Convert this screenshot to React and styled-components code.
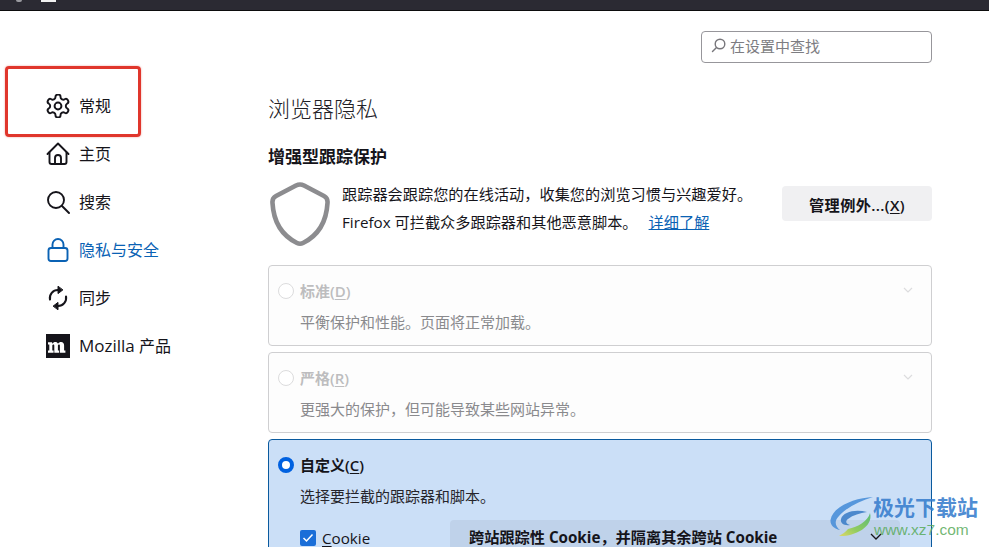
import React from 'react';
import styled, { createGlobalStyle } from 'styled-components';

const Global = createGlobalStyle`
  html, body {
    margin: 0;
    padding: 0;
    height: 547px;
    overflow: hidden;
    background: #fff;
  }
  body {
    font-family: "Open Sans", "Noto Sans CJK SC", sans-serif;
    color: #15141a;
  }
`;

const Page = styled.div`
  position: relative;
  width: 989px;
  height: 547px;
  overflow: hidden;
`;

const TopBar = styled.div`
  height: 10px;
  background: #2b2a33;
  border-bottom: 1px solid #0c0c0d;
  display: flex;
  align-items: flex-start;
  gap: 19px;
  padding-left: 16px;
`;

const TopDot = styled.span`
  width: 6px;
  height: 2px;
  background: #9a9aa0;
  border-radius: 0 0 3px 3px;
`;

const TopTab = styled.span`
  width: 15px;
  height: 2px;
  background: #f2f2f2;
`;

const Layout = styled.div`
  display: flex;
`;

const Sidebar = styled.nav`
  width: 268px;
  flex: none;
  padding: 71px 0 0 46px;
  box-sizing: border-box;
  display: flex;
  flex-direction: column;
`;

const NavItem = styled.div`
  height: 48px;
  display: flex;
  align-items: center;
  gap: 9px;
  font-size: 16px;
  color: ${(p) => (p.$active ? '#0a62b4' : '#15141a')};
`;

const NavLabel = styled.span`
  line-height: 22px;
  margin-top: -1px;
`;

const LatinWord = styled.span`
  font-size: 17px;
`;

const NavIcon = styled.svg`
  width: 24px;
  height: 24px;
  flex: none;
  fill: none;
  stroke: currentColor;
  stroke-width: ${(p) => p.$stroke || 1.9};
  stroke-linecap: round;
  stroke-linejoin: round;
`;

const Main = styled.main`
  width: 664px;
  flex: none;
`;

const SearchRow = styled.div`
  display: flex;
  justify-content: flex-end;
  padding-top: 20px;
`;

const SearchBox = styled.div`
  width: 231px;
  height: 32px;
  box-sizing: border-box;
  border: 1px solid #97969b;
  border-radius: 4px;
  display: flex;
  align-items: center;
  gap: 4px;
  padding: 0 0 3px 9px;
  color: #7d7d82;
  font-size: 15px;
`;

const SearchIcon = styled.svg`
  width: 15px;
  height: 15px;
  fill: none;
  stroke: #77767b;
  stroke-width: 1.4;
  stroke-linecap: round;
`;

const Title = styled.h1`
  margin: 30px 0 0;
  font-size: 22px;
  line-height: 30px;
  font-weight: 300;
  color: #222127;
`;

const SectionTitle = styled.h2`
  margin: 23px 0 0;
  font-size: 17px;
  line-height: 22px;
  font-weight: 700;
`;

const Intro = styled.div`
  display: flex;
  align-items: flex-start;
  margin-top: 14px;
  height: 83px;
`;

const ShieldIcon = styled.svg`
  width: 62px;
  height: 66px;
  flex: none;
  margin: -1px 11px 0 1px;
  fill: none;
  stroke: #8c8c8f;
  stroke-width: 4.6;
  stroke-linejoin: round;
`;

const IntroText = styled.div`
  flex: 1;
  font-size: 15.2px;
  line-height: 27.5px;
  margin-top: -1px;
`;

const LearnMore = styled.a`
  margin-left: 11px;
  color: #0a62b4;
  text-decoration: underline;
`;

const ManageButton = styled.button`
  width: 150px;
  height: 35px;
  margin-top: 4px;
  flex: none;
  border: none;
  border-radius: 4px;
  background: #f0f0f2;
  font-family: inherit;
  font-size: 15.2px;
  font-weight: 600;
  letter-spacing: 0.35px;
  color: #15141a;
  padding: 0;
`;

const Card = styled.section`
  position: relative;
  box-sizing: border-box;
  height: ${(p) => p.$height}px;
  margin-bottom: 6px;
  border: 1px solid ${(p) => (p.$selected ? '#0a5a9e' : '#cfcfd1')};
  border-radius: 4px;
  background: ${(p) => (p.$selected ? '#cbdff7' : '#fdfdfd')};
  padding: 12px 9px 0;
`;

const CardHead = styled.div`
  display: flex;
  align-items: center;
  gap: 6px;
  height: 26px;
  font-size: 15px;
  font-weight: 600;
  color: ${(p) => (p.$muted ? '#bdbdbf' : '#15141a')};
`;

const HeadLabel = styled.span`
  margin-top: -2px;
`;

const Radio = styled.span`
  width: 16px;
  height: 16px;
  box-sizing: border-box;
  border-radius: 50%;
  flex: none;
  background: #fff;
  border: ${(p) => (p.$on ? '4px solid #0061e0' : '1px solid #dcdcdd')};
`;

const Key = styled.span`
  text-decoration: underline;
  text-underline-offset: 2px;
`;

const CardText = styled.p`
  margin: 8px 0 0 22px;
  font-size: 15px;
  line-height: 20px;
  color: ${(p) => (p.$muted ? '#8a8a8d' : '#26252b')};
`;

const Chevron = styled.svg`
  position: absolute;
  top: 21px;
  right: 18px;
  width: 10px;
  height: 7px;
  fill: none;
  stroke: #dcdcde;
  stroke-width: 1.2;
`;

const CookieRow = styled.div`
  display: flex;
  align-items: flex-start;
  margin: 14px 0 0 22px;
`;

const CheckLabel = styled.label`
  display: flex;
  align-items: center;
  gap: 6px;
  width: 150px;
  height: 36px;
  font-size: 15.2px;
  color: #15141a;
`;

const Check = styled.svg`
  width: 16px;
  height: 16px;
  flex: none;
`;

const Select = styled.div`
  position: relative;
  flex: none;
  width: 450px;
  height: 36px;
  box-sizing: border-box;
  padding: 7px 0 0 19px;
  border-radius: 4px;
  background: #bfd2ea;
  font-size: 15.2px;
  line-height: 20px;
  font-weight: 700;
  color: #15141a;
`;

const SelectChevron = styled.svg`
  position: absolute;
  top: 13px;
  right: 18px;
  width: 12px;
  height: 8px;
  fill: none;
  stroke: #15141a;
  stroke-width: 1.3;
`;

const Highlight = styled.div`
  position: absolute;
  left: 5px;
  top: 66px;
  width: 136px;
  height: 71px;
  box-sizing: border-box;
  border: 3px solid #e0362c;
  border-radius: 4px;
  box-shadow: 0 0 2px rgba(224, 54, 44, 0.5);
`;

const Watermark = styled.div`
  position: absolute;
  left: 830px;
  top: 496px;
  width: 159px;
  height: 51px;
  display: flex;
`;

const WaterLogo = styled.svg`
  width: 44px;
  height: 42px;
  flex: none;
`;

const WaterText = styled.div`
  display: flex;
  flex-direction: column;
  margin: -3px 0 0 -1px;
`;

const WaterName = styled.span`
  font-size: 21px;
  line-height: 26px;
  font-weight: 700;
  color: rgba(55, 125, 205, 0.9);
  font-family: "Noto Sans CJK SC", sans-serif;
`;

const WaterUrl = styled.span`
  font-family: "Liberation Sans", sans-serif;
  font-size: 15.5px;
  line-height: 21px;
  padding-left: 1px;
  color: rgba(88, 170, 90, 0.85);
`;

const MozillaMark = styled.svg`
  width: 24px;
  height: 24px;
  flex: none;
`;

function GearIcon() {
  return (
    <NavIcon viewBox="1.5 1.5 21 21" $stroke={1.7}>
      <circle cx="12" cy="12" r="3" />
      <path d="M12.220 2h-.44a2 2 0 0 0-2 2v.180a2 2 0 0 1-1 1.730l-.43.250a2 2 0 0 1-2 0l-.150-.080a2 2 0 0 0-2.730.730l-.220.380a2 2 0 0 0 .730 2.730l.150.100a2 2 0 0 1 1 1.720v.510a2 2 0 0 1-1 1.740l-.150.090a2 2 0 0 0-.730 2.730l.220.380a2 2 0 0 0 2.730.730l.150-.080a2 2 0 0 1 2 0l.430.250a2 2 0 0 1 1 1.730V20a2 2 0 0 0 2 2h.440a2 2 0 0 0 2-2v-.180a2 2 0 0 1 1-1.730l.430-.250a2 2 0 0 1 2 0l.150.080a2 2 0 0 0 2.730-.730l.220-.390a2 2 0 0 0-.730-2.730l-.150-.080a2 2 0 0 1-1-1.740v-.500a2 2 0 0 1 1-1.740l.150-.090a2 2 0 0 0 .730-2.730l-.220-.380a2 2 0 0 0-2.730-.730l-.150.080a2 2 0 0 1-2 0l-.430-.250a2 2 0 0 1-1-1.730V4a2 2 0 0 0-2-2z" />
    </NavIcon>
  );
}

function HomeIcon() {
  return (
    <NavIcon viewBox="0 0 24 24">
      <path d="M1.500 12 12 1.500 22.500 12" />
      <path d="M3.500 10.500V20a2 2 0 0 0 2 2h13a2 2 0 0 0 2-2v-9.500" />
      <path d="M9 22v-6a3 3 0 0 1 6 0v6" />
    </NavIcon>
  );
}

function MagnifierIcon() {
  return (
    <NavIcon viewBox="0 0 24 24">
      <circle cx="10" cy="10" r="8" />
      <path d="m16 16 7 7" />
    </NavIcon>
  );
}

function LockIcon() {
  return (
    <NavIcon viewBox="0 0 24 24">
      <rect x="2.500" y="10" width="19" height="13" rx="2.500" />
      <path d="M6.500 10V6.500a5.500 5.500 0 0 1 11 0V10" />
    </NavIcon>
  );
}

function SyncIcon() {
  return (
    <NavIcon viewBox="0 0 24 24" $stroke={2.1}>
      <path d="M4 13.500A8 8 0 0 1 12 4" />
      <path d="M20 10.500A8 8 0 0 1 12 20" />
      <path d="M12 .6v7l4.600-3.500z" fill="currentColor" stroke="currentColor" strokeWidth="1" />
      <path d="M12 23.400v-7l-4.600 3.500z" fill="currentColor" stroke="currentColor" strokeWidth="1" />
    </NavIcon>
  );
}

function MozillaIcon() {
  return (
    <MozillaMark viewBox="0 0 24 24">
      <rect width="24" height="24" fill="#15141a" />
      <path
        d="M2 16.500h1.300V10.500H2V8.300h4l.4 1.400c.7-1.100 1.700-1.700 2.900-1.700 1.300 0 2.200.6 2.700 1.800.8-1.200 1.800-1.800 3.100-1.800 1.900 0 3 1.300 3 3.400v5.100h1.300v2.200h-5.500v-7c0-.9-.3-1.300-.9-1.300-.7 0-1.100.5-1.100 1.500v4.600h1.200v2.200H8.300v-7c0-.9-.3-1.300-.9-1.300-.7 0-1.100.5-1.100 1.500v4.600h1.300v2.200H2z"
        fill="#fff"
      />
    </MozillaMark>
  );
}

export default function App() {
  return (
    <Page>
      <Global />
      <TopBar>
        <TopDot />
        <TopTab />
      </TopBar>
      <Layout>
        <Sidebar>
          <NavItem><GearIcon /><NavLabel>常规</NavLabel></NavItem>
          <NavItem><HomeIcon /><NavLabel>主页</NavLabel></NavItem>
          <NavItem><MagnifierIcon /><NavLabel>搜索</NavLabel></NavItem>
          <NavItem $active><LockIcon /><NavLabel>隐私与安全</NavLabel></NavItem>
          <NavItem><SyncIcon /><NavLabel>同步</NavLabel></NavItem>
          <NavItem><MozillaIcon /><NavLabel><LatinWord>Mozilla</LatinWord> 产品</NavLabel></NavItem>
        </Sidebar>
        <Main>
          <SearchRow>
            <SearchBox>
              <SearchIcon viewBox="0 0 15 15">
                <circle cx="9" cy="6" r="4.800" />
                <path d="M5.500 9.500 1.500 13.500" />
              </SearchIcon>
              在设置中查找
            </SearchBox>
          </SearchRow>
          <Title>浏览器隐私</Title>
          <SectionTitle>增强型跟踪保护</SectionTitle>
          <Intro>
            <ShieldIcon viewBox="0 0 62 66">
              <path d="M27 4.500 7 15Q3 17 3.500 22C4.500 40 12 54 28 62Q31 63.500 34 62C50 54 57.500 40 58.500 22Q59 17 55 15L35 4.500Q31 2.500 27 4.500Z" />
            </ShieldIcon>
            <IntroText>
              跟踪器会跟踪您的在线活动，收集您的浏览习惯与兴趣爱好。
              <br />
              Firefox 可拦截众多跟踪器和其他恶意脚本。
              <LearnMore>详细了解</LearnMore>
            </IntroText>
            <ManageButton>管理例外...(<Key>X</Key>)</ManageButton>
          </Intro>
          <Card $height={81}>
            <CardHead $muted><Radio /><HeadLabel>标准(<Key>D</Key>)</HeadLabel></CardHead>
            <CardText $muted>平衡保护和性能。页面将正常加载。</CardText>
            <Chevron viewBox="0 0 10 7"><path d="m1 1 4 4 4-4" /></Chevron>
          </Card>
          <Card $height={81}>
            <CardHead $muted><Radio /><HeadLabel>严格(<Key>R</Key>)</HeadLabel></CardHead>
            <CardText $muted>更强大的保护，但可能导致某些网站异常。</CardText>
            <Chevron viewBox="0 0 10 7"><path d="m1 1 4 4 4-4" /></Chevron>
          </Card>
          <Card $height={180} $selected>
            <CardHead><Radio $on /><HeadLabel>自定义(<Key>C</Key>)</HeadLabel></CardHead>
            <CardText>选择要拦截的跟踪器和脚本。</CardText>
            <CookieRow>
              <CheckLabel>
                <Check viewBox="0 0 16 16">
                  <rect width="16" height="16" rx="2" fill="#1a6ed8" />
                  <path d="m3.500 8 3 3 6-6.500" fill="none" stroke="#fff" strokeWidth="1.500" />
                </Check>
                <span><Key>C</Key>ookie</span>
              </CheckLabel>
              <Select>
                跨站跟踪性 Cookie，并隔离其余跨站 Cookie
                <SelectChevron viewBox="0 0 12 8"><path d="m1 1 5 5 5-5" /></SelectChevron>
              </Select>
            </CookieRow>
          </Card>
        </Main>
      </Layout>
      <Highlight />
      <Watermark>
        <WaterLogo viewBox="0 0 44 42">
          <defs>
            <linearGradient id="waterGreen" x1="1" y1="0" x2="0" y2="1">
              <stop offset="0" stopColor="#4fb86a" />
              <stop offset="0.6" stopColor="#8ccb50" />
              <stop offset="1" stopColor="#e2d95a" />
            </linearGradient>
          </defs>
          <path d="M43 1C25 2 3 10 .5 24 0 29 4 33 10 34 5 30 4 25 9 20 17 11 30 5 43 1z" fill="#4a8fd8" opacity="0.9" />
          <path d="M37 16C25 13 13 16 11 23c-1 4 3 7 9 6-4-1-5-4-2-6 5-4 12-6 19-7z" fill="#3f80c8" opacity="0.9" />
          <path d="M40 17c-2 8-12 14-22 16-2 3-6 5-9 7 13 1 35-8 31-23z" fill="url(#waterGreen)" opacity="0.9" />
        </WaterLogo>
        <WaterText>
          <WaterName>极光下载站</WaterName>
          <WaterUrl>www.xz7.com</WaterUrl>
        </WaterText>
      </Watermark>
    </Page>
  );
}
